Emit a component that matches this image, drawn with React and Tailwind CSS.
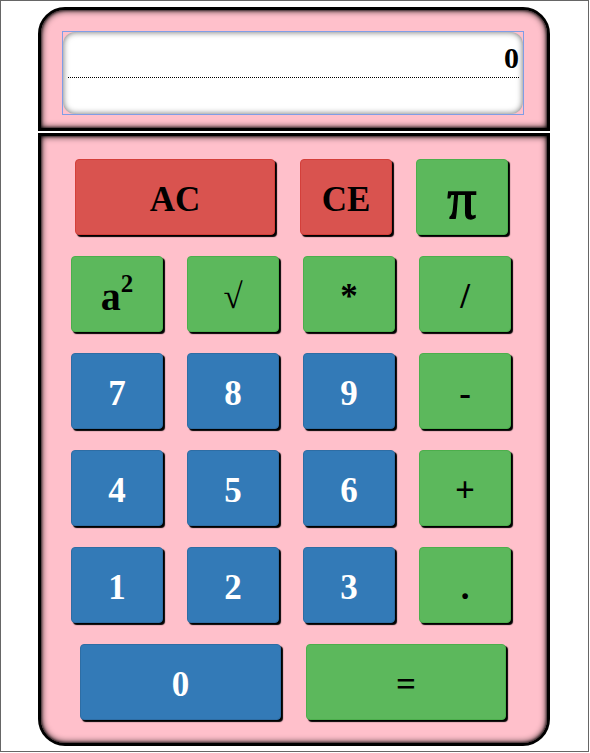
import React from "react";

const serif = { fontFamily: '"Liberation Serif", "Times New Roman", serif' };

function Btn({ w = "w-[92px]", color, children, extra = "" }) {
  const colors = {
    red: "bg-[#d9534f] border-[#d43f3a] text-black",
    green: "bg-[#5cb85c] border-[#4cae4c] text-black",
    blue: "bg-[#337ab7] border-[#2e6da4] text-white",
  };
  return (
    <div
      className={`${w} h-[76px] shrink-0 rounded-[4px] border shadow-[2px_2px_1px_#000] flex items-center justify-center font-bold text-[35px] leading-none ${colors[color]} ${extra}`}
    >
      {children}
    </div>
  );
}

export default function App() {
  return (
    <div className="w-[589px] h-[752px] border border-[#666] bg-white" style={serif}>
      <div className="ml-[37px] mt-[6px] w-[512px]">
        <div className="h-[124px] border-[3px] border-black rounded-t-[27px] bg-[#ffc0cb] shadow-[inset_0_0_7px_#000,inset_0_0_3px_#000] pl-[21px] pt-[21px]">
          <div className="w-[462px] h-[84px] border border-[#7f9de6]">
            <div className="h-full rounded-[12px] bg-white shadow-[inset_0_0_6px_rgba(0,0,0,0.6)] pl-[5px] pr-[4px]">
              <div className="h-[46px] pt-[9px] border-b border-dotted border-black text-right text-[30px] font-bold leading-[33px]">
                0
              </div>
            </div>
          </div>
        </div>
        <div className="mt-[2px] h-[613px] border-[3px] border-black rounded-b-[27px] bg-[#ffc0cb] shadow-[inset_0_0_7px_#000,inset_0_0_3px_#000] pt-[23px] flex flex-col gap-[21px]">
          <div className="flex gap-[25px] pl-[34px]">
            <Btn w="w-[200px]" color="red" extra="pt-[5px]">AC</Btn>
            <div className="flex gap-[24px]">
              <Btn color="red" extra="pt-[5px]">CE</Btn>
              <Btn color="green" extra="text-[58px] font-normal pt-[4px] [-webkit-text-stroke:1.3px_#000]">π</Btn>
            </div>
          </div>
          <div className="flex gap-[24px] pl-[30px]">
            <Btn color="green" extra="pt-[5px]">
              <span className="text-[40px]">a</span>
              <span className="text-[25px] -translate-y-[13px]">2</span>
            </Btn>
            <Btn color="green" extra="pt-[5px] font-normal">√</Btn>
            <Btn color="green" extra="pt-[5px]">*</Btn>
            <Btn color="green" extra="pt-[5px]">/</Btn>
          </div>
          <div className="flex gap-[24px] pl-[30px]">
            <Btn color="blue" extra="pt-[5px]">7</Btn>
            <Btn color="blue" extra="pt-[5px]">8</Btn>
            <Btn color="blue" extra="pt-[5px]">9</Btn>
            <Btn color="green" extra="pt-[5px]">-</Btn>
          </div>
          <div className="flex gap-[24px] pl-[30px]">
            <Btn color="blue" extra="pt-[5px]">4</Btn>
            <Btn color="blue" extra="pt-[5px]">5</Btn>
            <Btn color="blue" extra="pt-[5px]">6</Btn>
            <Btn color="green" extra="pt-[5px]">+</Btn>
          </div>
          <div className="flex gap-[24px] pl-[30px]">
            <Btn color="blue" extra="pt-[5px]">1</Btn>
            <Btn color="blue" extra="pt-[5px]">2</Btn>
            <Btn color="blue" extra="pt-[5px]">3</Btn>
            <Btn color="green" extra="pt-[5px]">.</Btn>
          </div>
          <div className="flex gap-[25px] pl-[39px]">
            <Btn w="w-[201px]" color="blue" extra="pt-[5px]">0</Btn>
            <Btn w="w-[200px]" color="green" extra="pt-[5px]">=</Btn>
          </div>
        </div>
      </div>
    </div>
  );
}
